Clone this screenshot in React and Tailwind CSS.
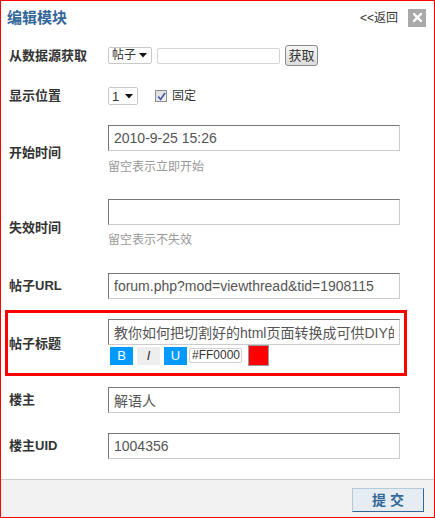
import React from "react";

const FONT = "font-['Liberation_Sans','Noto_Sans_CJK_SC',sans-serif]";

function Label({ children, className = "" }) {
  return (
    <div className={"w-[99px] shrink-0 text-[13px] leading-[18px] font-bold text-[#333] " + className}>
      {children}
    </div>
  );
}

function Field({ value = "" }) {
  return (
    <input
      readOnly
      defaultValue={value}
      className="block w-[292px] h-[26px] border border-t-[#777] border-l-[#777] border-r-[#ccc] border-b-[#ccc] px-[5px] text-[14px] text-[#555] bg-white outline-none"
    />
  );
}

function Arrow() {
  return (
    <svg width="8" height="5" viewBox="0 0 8 5">
      <polygon points="0,0 8,0 4,4.5" fill="#111" />
    </svg>
  );
}

export default function App() {
  return (
    <div className={"w-[435px] h-[518px] border border-[#ff0000] bg-white flex flex-col " + FONT}>
      {/* header */}
      <div className="h-[33px] shrink-0 flex items-center justify-between pl-[6px] pr-[8px]">
        <div className="text-[15px] leading-[20px] font-bold text-[#336699]">编辑模块</div>
        <div className="flex items-center">
          <span className="text-[12px] leading-[16px] text-[#333]">&lt;&lt;返回</span>
          <div className="ml-[10px] w-[18px] h-[18px] bg-[#a9a9a9] flex items-center justify-center">
            <svg width="9" height="9" viewBox="0 0 9 9">
              <path d="M1 1 L8 8 M8 1 L1 8" stroke="#fff" strokeWidth="2.4" strokeLinecap="square" />
            </svg>
          </div>
        </div>
      </div>

      {/* row 1 */}
      <div className="mt-[11px] h-[21px] flex items-center pl-[8px]">
        <Label>从数据源获取</Label>
        <div className="flex items-center">
          <div className="w-[44px] h-[17px] border border-[#c8c8c8] rounded-[2px] flex items-center justify-between pl-[3px] pr-[4px] text-[12px] leading-[15px] text-[#333]">
            <span>帖子</span>
            <Arrow />
          </div>
          <div className="ml-[5px] w-[123px] h-[16px] border border-[#d4d4d4] rounded-[2px] bg-white" />
          <div className="ml-[5px] w-[33px] h-[21px] border border-[#8a8a8a] rounded-[3px] bg-gradient-to-b from-[#f6f6f6] to-[#dcdcdc] flex items-center justify-center text-[13px] leading-[16px] text-[#333]">
            获取
          </div>
        </div>
      </div>

      {/* row 2 */}
      <div className="mt-[21px] h-[18px] flex items-center pl-[8px]">
        <Label>显示位置</Label>
        <div className="flex items-center">
          <div className="w-[30px] h-[18px] border border-[#c8c8c8] rounded-[2px] flex items-center justify-between pl-[3px] pr-[4px] text-[13px] leading-[15px] text-[#333]">
            <span>1</span>
            <Arrow />
          </div>
          <div className="ml-[17px] w-[12px] h-[12px] border border-[#8e8f8f] bg-gradient-to-br from-[#dcdcdc] to-[#f4f4f4] flex items-center justify-center">
            <svg width="9" height="9" viewBox="0 0 9 9">
              <path d="M1.2 4.5 L3.6 7.4 L8 1" stroke="#3d57a8" strokeWidth="1.6" fill="none" />
            </svg>
          </div>
          <span className="ml-[5px] text-[12px] leading-[16px] text-[#333]">固定</span>
        </div>
      </div>

      {/* row 3 */}
      <div className="mt-[20px] flex items-start pl-[8px]">
        <Label className="mt-[19px]">开始时间</Label>
        <div>
          <Field value="2010-9-25 15:26" />
          <div className="mt-[8px] text-[12px] leading-[16px] text-[#999]">留空表示立即开始</div>
        </div>
      </div>

      {/* row 4 */}
      <div className="mt-[24px] flex items-start pl-[8px]">
        <Label className="mt-[20px]">失效时间</Label>
        <div>
          <Field value="" />
          <div className="mt-[7px] text-[12px] leading-[16px] text-[#999]">留空表示不失效</div>
        </div>
      </div>

      {/* row 5 */}
      <div className="mt-[25px] flex items-center pl-[8px]">
        <Label>帖子URL</Label>
        <Field value="forum.php?mod=viewthread&tid=1908115" />
      </div>

      {/* row 6 - highlighted */}
      <div className="mt-[11px] ml-[4px] w-[402px] h-[66px] border-[3px] border-[#ff0000] flex items-start pl-[1px] pt-[6px]">
        <Label className="mt-[16px]">帖子标题</Label>
        <div>
          <Field value="教你如何把切割好的html页面转换成可供DIY的模块" />
          <div className="h-[21px] flex items-center">
            <div className="ml-[2px] w-[23px] h-[18px] bg-[#0099ff] text-white text-[13px] leading-[18px] text-center">B</div>
            <div className="ml-[4px] w-[23px] h-[18px] bg-[#eeeeee] text-[#333] italic text-[13px] leading-[18px] text-center">I</div>
            <div className="ml-[4px] w-[23px] h-[18px] bg-[#0099ff] text-white text-[13px] leading-[18px] text-center">U</div>
            <div className="ml-[2px] w-[53px] h-[15px] border border-[#d0d0d0] rounded-[2px] bg-white text-[12px] leading-[13px] text-[#333] pl-[2px]">#FF0000</div>
            <div className="ml-[6px] w-[21px] h-[21px] bg-[#ff0000] border border-[#9a9a9a]" />
          </div>
        </div>
      </div>

      {/* row 7 */}
      <div className="mt-[11px] flex items-center pl-[8px]">
        <Label>楼主</Label>
        <Field value="解语人" />
      </div>

      {/* row 8 */}
      <div className="mt-[20px] flex items-center pl-[8px]">
        <Label>楼主UID</Label>
        <Field value="1004356" />
      </div>

      {/* footer */}
      <div className="mt-auto h-[38px] shrink-0 border-t border-[#cccccc] bg-[#f2f2f2] flex items-start justify-end pt-[8px] pr-[10px]">
        <div className="w-[72px] h-[24px] bg-[#e5edf2] border border-t-[#b3c9dc] border-l-[#b3c9dc] border-r-[#336699] border-b-[#336699] flex items-center justify-center pl-[4px] text-[14px] leading-[18px] font-bold tracking-[4px] text-[#336699]">
          提交
        </div>
      </div>
    </div>
  );
}
